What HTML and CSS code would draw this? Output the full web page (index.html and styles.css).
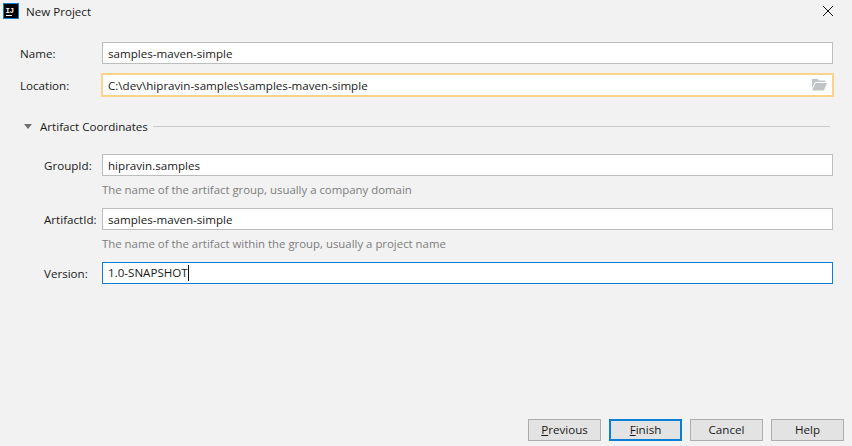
FILE: index.html
```html
<!DOCTYPE html>
<html lang="en">
<head>
  <meta charset="UTF-8" />
  <title>New Project</title>
  <link rel="stylesheet" href="styles.css">
</head>
<body>
  <div class="dialog">
    <div class="titlebar">
      <svg class="app-icon" width="16" height="16" viewBox="0 0 16 16">
        <rect x="0.5" y="0.5" width="15" height="15" fill="#000" stroke="#0b7fd6"/>
        <rect x="3" y="12" width="6" height="1" fill="#fff"/>
        <text x="2.5" y="9.5" class="app-icon-text">IJ</text>
      </svg>
      <span class="title">New Project</span>
      <svg class="close" width="10" height="10" viewBox="0 0 10 10">
        <path d="M0 0L10 10M10 0L0 10" stroke="#111" stroke-width="1" fill="none"/>
      </svg>
    </div>

    <div class="content">
      <div class="row">
        <label class="row-label">Name:</label>
        <div class="field">samples-maven-simple</div>
      </div>
      <div class="row row-location">
        <label class="row-label">Location:</label>
        <div class="field field-warn">
          <span>C:\dev\hipravin-samples\samples-maven-simple</span>
          <svg width="15" height="12" viewBox="0 0 15 12">
            <path d="M0 0H6L7 1.5H13V3H3L0 9Z" fill="#bfc4c6"/>
            <path d="M3.5 4H15L12 11.5H0Z" fill="#bfc4c6"/>
          </svg>
        </div>
      </div>

      <div class="section-head">
        <span class="arrow"></span>
        <span class="section-title">Artifact Coordinates</span>
        <span class="section-line"></span>
      </div>

      <div class="section-body">
        <div class="row">
          <label class="row-label">GroupId:</label>
          <div class="field">hipravin.samples</div>
        </div>
        <div class="hint">The name of the artifact group, usually a company domain</div>
        <div class="row">
          <label class="row-label">ArtifactId:</label>
          <div class="field">samples-maven-simple</div>
        </div>
        <div class="hint">The name of the artifact within the group, usually a project name</div>
        <div class="row">
          <label class="row-label">Version:</label>
          <div class="field field-focus"><span class="caret-text">1.0-SNAPSHOT</span></div>
        </div>
      </div>
    </div>

    <div class="buttons">
      <button class="btn"><u>P</u>revious</button>
      <button class="btn btn-default"><u>F</u>inish</button>
      <button class="btn">Cancel</button>
      <button class="btn">Help</button>
    </div>
  </div>
</body>
</html>
```

FILE: styles.css
```css
html, body {
  margin: 0;
  padding: 0;
}

body {
  width: 852px;
  height: 446px;
  overflow: hidden;
  background: #f2f2f2;
  font-family: "Open Sans", "Noto Sans", sans-serif;
  font-size: 11.6px;
  color: #1a1a1a;
}

.dialog {
  height: 446px;
  display: flex;
  flex-direction: column;
}

.titlebar {
  height: 22px;
  padding: 0 19px 0 3px;
  display: flex;
  align-items: center;
  gap: 7px;
}

.app-icon-text {
  font-family: "Liberation Mono", monospace;
  font-size: 7.5px;
  font-weight: bold;
  letter-spacing: -0.5px;
  fill: #fff;
}

.title {
  flex: 1;
}

.content {
  padding: 20px 19px 0 20px;
  flex: 1;
}

.row {
  display: flex;
  align-items: center;
  height: 22px;
}

.row-location {
  margin-top: 10px;
}

.row-label {
  width: 82px;
  flex-shrink: 0;
}

.field {
  flex: 1;
  height: 22px;
  box-sizing: border-box;
  border: 1px solid #bdbdbd;
  background: #fff;
  padding: 0 5px;
  display: flex;
  align-items: center;
  justify-content: space-between;
  white-space: nowrap;
}

.field-warn {
  height: 24px;
  margin: 0 -1px;
  border: 2px solid #fdd48a;
  padding-right: 5px;
}

.field-focus {
  border-color: #0b7fd6;
}

.caret-text {
  border-right: 1px solid #111;
  line-height: 16px;
}

.section-head {
  display: flex;
  align-items: center;
  margin-top: 23px;
  height: 15px;
}

.arrow {
  width: 0;
  height: 0;
  margin: 0 8px 0 4px;
  border-left: 4px solid transparent;
  border-right: 4px solid transparent;
  border-top: 5px solid #707070;
}

.section-line {
  flex: 1;
  height: 1px;
  margin: 0 3px 0 5px;
  background: #cdcdcd;
}

.section-body {
  margin-top: 20px;
  padding-left: 24px;
}

.section-body .row-label {
  width: 58px;
}

.hint {
  height: 32px;
  padding: 6px 0 0 58px;
  box-sizing: border-box;
  font-size: 11.4px;
  color: #7d7d7d;
  line-height: 16px;
}

.buttons {
  display: flex;
  justify-content: flex-end;
  gap: 8px;
  padding: 0 8px 5px 0;
}

.btn {
  width: 73px;
  height: 22px;
  padding: 0 0 2px;
  background: #e3e3e3;
  border: 1px solid #adadad;
  border-radius: 0;
  font: inherit;
  color: #1a1a1a;
}

.btn-default {
  border: 2px solid #0b7fd6;
}
```
